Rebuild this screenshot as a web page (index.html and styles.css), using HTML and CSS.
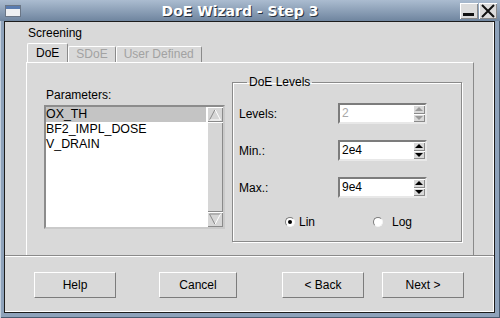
FILE: index.html
```
<!DOCTYPE html>
<html lang="en">
<head>
    <meta charset="UTF-8">
    <title>DoE Wizard - Step 3</title>
    <link rel="stylesheet" href="styles.css">
</head>
<body>
    <div class="window">
        <div class="titlebar">
            <span class="app-icon"><span class="app-icon-bar"></span></span>
            <span class="title">DoE Wizard - Step 3</span>
            <span class="wm-btn">
                <svg width="18" height="16" viewBox="0 0 18 16"><rect x="3" y="10" width="11" height="3" fill="#111"/></svg>
            </span>
            <span class="wm-btn">
                <svg width="18" height="16" viewBox="0 0 18 16"><path d="M3 2 L15 14 M15 2 L3 14" stroke="#111" stroke-width="2" fill="none"/></svg>
            </span>
        </div>

        <div class="client">
            <div class="page">
                <div class="caption">Screening</div>
                <div class="tabs">
                    <span class="tab active">DoE</span>
                    <span class="tab">SDoE</span>
                    <span class="tab">User Defined</span>
                </div>
                <div class="tab-panel">
                    <div class="params">
                        <div class="params-label">Parameters:</div>
                        <div class="listbox">
                            <ul class="list">
                                <li class="selected">OX_TH</li>
                                <li>BF2_IMPL_DOSE</li>
                                <li>V_DRAIN</li>
                            </ul>
                            <div class="scrollbar">
                                <span class="sb-btn">
                                    <svg width="14" height="13" viewBox="0 0 14 13"><path d="M7 1.5 L1.5 12 L12.5 12 Z" fill="#d6d6d6"/><path d="M1.5 12 L7 1.5" stroke="#8a8a8a" fill="none"/><path d="M7 1.5 L12.5 12 L1.5 12" stroke="#fff" fill="none"/></svg>
                                </span>
                                <span class="sb-thumb"></span>
                                <span class="sb-btn">
                                    <svg width="14" height="13" viewBox="0 0 14 13"><path d="M1.5 1 L12.5 1 L7 11.5 Z" fill="#d6d6d6"/><path d="M12.5 1 L1.5 1 L7 11.5" stroke="#8a8a8a" fill="none"/><path d="M7 11.5 L12.5 1" stroke="#fff" fill="none"/></svg>
                                </span>
                            </div>
                        </div>
                    </div>

                    <fieldset class="levels">
                        <legend>DoE Levels</legend>
                        <div class="row">
                            <span class="row-label">Levels:</span>
                            <span class="spinbox disabled">
                                <span class="spin-value">2</span>
                                <span class="spin-arrows">
                                    <span class="arrow-up"></span>
                                    <span class="arrow-down"></span>
                                </span>
                            </span>
                        </div>
                        <div class="row">
                            <span class="row-label">Min.:</span>
                            <span class="spinbox">
                                <span class="spin-value">2e4</span>
                                <span class="spin-arrows">
                                    <span class="arrow-up"></span>
                                    <span class="arrow-down"></span>
                                </span>
                            </span>
                        </div>
                        <div class="row">
                            <span class="row-label">Max.:</span>
                            <span class="spinbox">
                                <span class="spin-value">9e4</span>
                                <span class="spin-arrows">
                                    <span class="arrow-up"></span>
                                    <span class="arrow-down"></span>
                                </span>
                            </span>
                        </div>
                        <div class="radios">
                            <span class="radio checked"></span><span class="radio-text lin">Lin</span>
                            <span class="radio log"></span><span class="radio-text">Log</span>
                        </div>
                    </fieldset>
                </div>
            </div>

            <div class="separator"></div>

            <div class="buttons">
                <button class="btn help">Help</button>
                <button class="btn cancel">Cancel</button>
                <button class="btn back">&lt; Back</button>
                <button class="btn next">Next &gt;</button>
            </div>
        </div>
    </div>
</body>
</html>
```

FILE: styles.css
```
/* Motif style wizard dialog */
body {
    margin: 0;
    font-family: "Liberation Sans", Arial, sans-serif;
    font-size: 12px;
    color: #000;
}

.window {
    width: 500px;
    height: 318px;
    box-sizing: border-box;
    padding: 0 5px 5px 4px;
    background-color: #8ea2ba;
    box-shadow: inset 1px 0 0 #c4d0de, inset -1px -1px 0 #4a5a6e;
    display: flex;
    flex-direction: column;
}

/* Title bar */
.titlebar {
    height: 21px;
    margin: 0 -5px 0 -4px;
    padding: 0 3px 0 5px;
    display: flex;
    align-items: center;
    background: linear-gradient(#abbcd0, #6f859f);
}

.app-icon {
    width: 14px;
    height: 10px;
    margin-top: 1px;
    border: 1px solid #6a7686;
    background-color: #eef0f2;
}

.app-icon-bar {
    display: block;
    height: 3px;
    background-color: #5a7cb0;
}

.title {
    flex: 1;
    text-align: center;
    font-family: "DejaVu Sans", sans-serif;
    font-weight: bold;
    font-size: 14px;
    color: #fff;
    text-shadow: 1px 1px 0 #2a3340;
}

.wm-btn {
    width: 18px;
    height: 16px;
    margin-left: 1px;
    margin-top: 1px;
    background-color: #dcdcdc;
    box-shadow: inset 1px 1px 0 #fff, inset -1px -1px 0 #8a8a8a;
    display: flex;
}

/* Client area */
.client {
    flex: 1;
    background-color: #d9d9d9;
    border: 1px solid #1c1c1c;
    box-shadow: inset -1px -1px 0 #fff;
    display: flex;
    flex-direction: column;
}

.page {
    padding: 4px 20px 0 21px;
}

.caption {
    line-height: 14px;
    margin-left: 2px;
}

.tabs {
    display: flex;
    align-items: flex-end;
    margin-top: 3px;
    margin-left: 1px;
    height: 19px;
}

.tab {
    height: 15px;
    line-height: 15px;
    padding: 0 7px;
    color: #a2a2a2;
    border-top: 1px solid #fff;
    border-left: 1px solid #fff;
    border-right: 1px solid #8a8a8a;
    border-radius: 2px 2px 0 0;
}

.tab.active {
    height: 18px;
    line-height: 18px;
    padding: 0 8px;
    color: #000;
}

.tab-panel {
    height: 180px;
    border-top: 1px solid #fff;
    border-left: 1px solid #fff;
    border-right: 1px solid #8a8a8a;
    padding: 12px 11px 0 17px;
    display: flex;
    align-items: flex-start;
}

/* Parameter list */
.params {
    margin-top: 13px;
    margin-right: 7px;
}

.params-label {
    line-height: 14px;
    margin-left: 2px;
    margin-bottom: 3px;
}

.listbox {
    width: 177px;
    height: 120px;
    display: flex;
    border: 2px solid;
    border-color: #8c8c8c #cacaca #cacaca #8c8c8c;
}

.list {
    flex: 1;
    margin: 0;
    padding: 0;
    list-style: none;
    background-color: #fff;
}

.list li {
    height: 15px;
    line-height: 15px;
    font-size: 12.4px;
}

.list li.selected {
    background-color: #c4c4c4;
}

.scrollbar {
    width: 16px;
    display: flex;
    flex-direction: column;
    background-color: #c8c8c8;
    border-left: 1px solid #fff;
}

.sb-btn {
    height: 15px;
    display: flex;
    align-items: center;
    justify-content: center;
    background-color: #d6d6d6;
    box-shadow: inset 1px 1px 0 #fff, inset -1px -1px 0 #8a8a8a;
}

.sb-thumb {
    flex: 1;
    background-color: #d6d6d6;
    box-shadow: inset 1px 1px 0 #fff, inset -1px -1px 0 #8a8a8a;
}

/* DoE levels group */
.levels {
    width: 230px;
    box-sizing: border-box;
    margin: 0;
    padding: 0 0 12px 6px;
    border: 1px solid #8a8a8a;
    box-shadow: 1px 1px 0 #fff, inset 1px 1px 0 #fff;
}

.levels legend {
    padding: 0 2px;
    margin-left: 8px;
    line-height: 14px;
}

.row {
    display: flex;
    align-items: center;
    height: 21px;
    margin-top: 16px;
}

.row:first-of-type {
    margin-top: 14px;
}

.row-label {
    width: 99px;
}

.spinbox {
    width: 89px;
    height: 21px;
    box-sizing: border-box;
    display: flex;
    border: 2px solid;
    border-color: #7c7c7c #e8e8e8 #e8e8e8 #7c7c7c;
}

.spin-value {
    flex: 1;
    background-color: #fff;
    padding-left: 2px;
    line-height: 17px;
}

.spinbox.disabled .spin-value {
    color: #a8a8a8;
}

.spin-arrows {
    width: 12px;
    display: flex;
    flex-direction: column;
    background-color: #d9d9d9;
}

.arrow-up,
.arrow-down {
    flex: 1;
    display: flex;
    align-items: center;
    justify-content: center;
    box-shadow: inset 1px 1px 0 #fff, inset -1px -1px 0 #8a8a8a;
}

.arrow-up::after {
    content: "";
    border-left: 4px solid transparent;
    border-right: 4px solid transparent;
    border-bottom: 4px solid #000;
}

.arrow-down::after {
    content: "";
    border-left: 4px solid transparent;
    border-right: 4px solid transparent;
    border-top: 4px solid #000;
}

.spinbox.disabled .arrow-up::after {
    border-bottom-color: #9a9a9a;
}

.spinbox.disabled .arrow-down::after {
    border-top-color: #9a9a9a;
}

.radios {
    display: flex;
    align-items: center;
    height: 14px;
    margin-top: 17px;
    padding-left: 46px;
}

.radio {
    width: 10px;
    height: 10px;
    box-sizing: border-box;
    border-radius: 50%;
    background-color: #fff;
    border: 1px solid;
    border-color: #7c7c7c #f4f4f4 #f4f4f4 #7c7c7c;
    display: flex;
    align-items: center;
    justify-content: center;
}

.radio.checked::after {
    content: "";
    width: 4px;
    height: 4px;
    border-radius: 50%;
    background-color: #000;
}

.radio-text {
    margin-left: 4px;
}

.radio-text.lin {
    margin-right: 58px;
}

.radio.log + .radio-text {
    margin-left: 9px;
}

/* Bottom buttons */
.separator {
    height: 0;
    border-top: 1px solid #8a8a8a;
    border-bottom: 1px solid #fff;
}

.buttons {
    display: flex;
    padding: 15px 0 0 29px;
}

.btn {
    height: 26px;
    width: 82px;
    font-family: "Liberation Sans", Arial, sans-serif;
    font-size: 12px;
    color: #000;
    background-color: #d9d9d9;
    border: 1px solid;
    border-color: #fff #7c7c7c #7c7c7c #fff;
    padding: 0;
}

.btn.cancel {
    width: 78px;
    margin-left: 43px;
}

.btn.back {
    margin-left: 45px;
}

.btn.next {
    margin-left: 18px;
}
```
